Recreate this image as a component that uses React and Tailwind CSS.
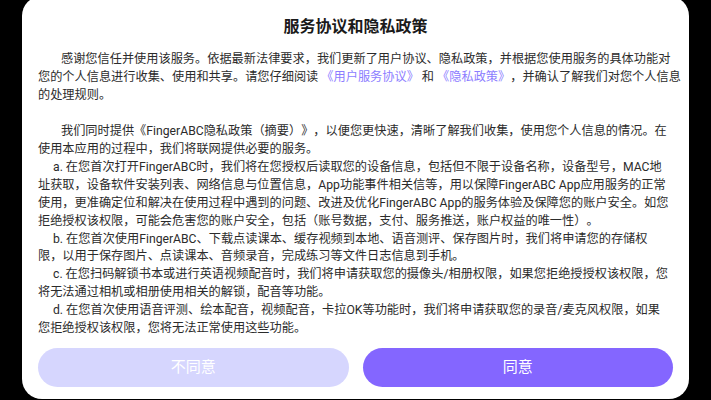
import React from 'react';

const font = { fontFamily: '"Roboto", "Noto Sans CJK SC", sans-serif' };

const items = [
    [
        'a. 在您首次打开FingerABC时，我们将在您授权后读取您的设备信息，包括但不限于设备名称，设备型号，MAC地',
        '址获取，设备软件安装列表、网络信息与位置信息，App功能事件相关信等，用以保障FingerABC App应用服务的正常',
        '使用，更准确定位和解决在使用过程中遇到的问题、改进及优化FingerABC App的服务体验及保障您的账户安全。如您',
        '拒绝授权该权限，可能会危害您的账户安全，包括（账号数据，支付、服务推送，账户权益的唯一性）。',
    ],
    [
        'b. 在您首次使用FingerABC、下载点读课本、缓存视频到本地、语音测评、保存图片时，我们将申请您的存储权',
        '限，以用于保存图片、点读课本、音频录音，完成练习等文件日志信息到手机。',
    ],
    [
        'c. 在您扫码解锁书本或进行英语视频配音时，我们将申请获取您的摄像头/相册权限，如果您拒绝授授权该权限，您',
        '将无法通过相机或相册使用相关的解锁，配音等功能。',
    ],
    [
        'd. 在您首次使用语音评测、绘本配音，视频配音，卡拉OK等功能时，我们将申请获取您的录音/麦克风权限，如果',
        '您拒绝授权该权限，您将无法正常使用这些功能。',
    ],
];

function Lines({ lines, indent }) {
    return (
        <p className="whitespace-nowrap">
            {lines.map((line, i) => (
                <span key={i} className={`block ${i === 0 ? indent : ''}`}>{line}</span>
            ))}
        </p>
    );
}

export default function App() {
    return (
        <div className="w-[711px] h-[400px] overflow-hidden bg-black" style={font}>
            <div className="mx-[22px] mt-[-4px] h-[403px] rounded-[20px] bg-white flex flex-col px-[16px] pb-[12px]">
                <h2 className="pt-[19px] text-center text-[16px] leading-[24px] font-bold text-[#1a1a1a]">
                    服务协议和隐私政策
                </h2>

                <div className="mt-[12px] text-[12.2px] leading-[17.95px] text-[#2b2b2b] [text-spacing-trim:space-all]">
                    <p className="whitespace-nowrap">
                        <span className="block pl-[23px]">感谢您信任并使用该服务。依据最新法律要求，我们更新了用户协议、隐私政策，并根据您使用服务的具体功能对</span>
                        <span className="block">
                            您的个人信息进行收集、使用和共享。请您仔细阅读 <span className="text-[#8c7dff]">《用户服务协议》</span> 和 <span className="text-[#8c7dff]">《隐私政策》</span>，并确认了解我们对您个人信息
                        </span>
                        <span className="block">的处理规则。</span>
                    </p>

                    <div className="h-[17.95px]" />

                    <Lines
                        indent="pl-[23px]"
                        lines={[
                            '我们同时提供《FingerABC隐私政策（摘要）》，以便您更快速，清晰了解我们收集，使用您个人信息的情况。在',
                            '使用本应用的过程中，我们将联网提供必要的服务。',
                        ]}
                    />

                    {items.map((lines, i) => (
                        <Lines key={i} lines={lines} indent="pl-[15px]" />
                    ))}
                </div>

                {/* Buttons */}
                <div className="mt-auto flex gap-[14px]">
                    <button className="flex-1 h-[39px] rounded-full bg-[#d6d6fe] text-white text-[15px]">
                        不同意
                    </button>
                    <button className="flex-1 h-[39px] rounded-full bg-[#8466ff] text-white text-[15px]">
                        同意
                    </button>
                </div>
            </div>
        </div>
    );
}
